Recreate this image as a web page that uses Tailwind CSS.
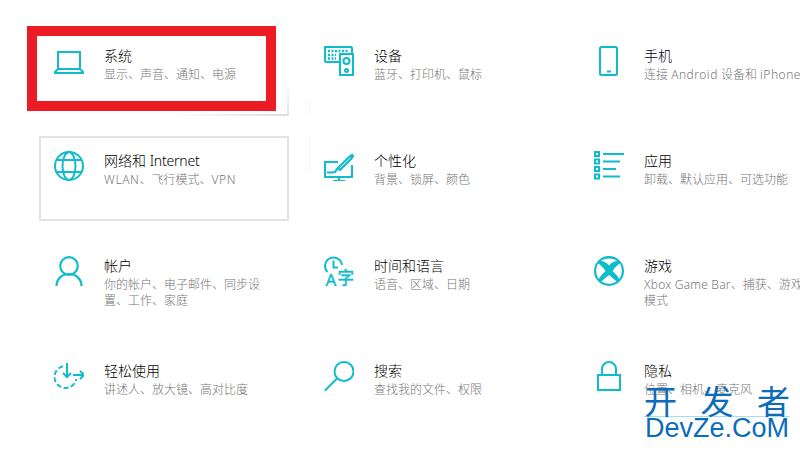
<!DOCTYPE html>
<html lang="zh-CN">

<head>
  <meta charset="UTF-8">
  <title>Windows 设置</title>
  <script src="https://cdn.jsdelivr.net/npm/@tailwindcss/browser@4"></script>
</head>

<body class="bg-white">
  <div class="relative w-[800px] h-[450px] overflow-hidden bg-white font-['Noto_Sans','Noto_Sans_CJK_SC',sans-serif] font-light">
    <div class="grid grid-cols-[270px_270px_270px] auto-rows-[105px] pl-[40px] pt-[32px]">

      <!-- row 1 -->
      <div class="flex gap-[20px] w-[249px] h-[84px] pl-[14px] pt-[14px]">
        <svg class="w-[30px] h-[30px] shrink-0" viewBox="0 0 30 30" fill="none" stroke="#0fbccb" stroke-width="2">
          <path d="M4 23V6h22v17" />
          <path d="M4 23L1 26v1h28v-1l-3-3z" />
        </svg>
        <div class="w-[160px]">
          <div class="text-[14px] leading-[20px] text-black">系统</div>
          <div class="mt-px text-[12px] leading-[16px] text-[#767676]">显示、声音、通知、电源</div>
        </div>
      </div>
      <div class="flex gap-[20px] w-[249px] h-[84px] pl-[14px] pt-[14px]">
        <svg class="w-[30px] h-[30px] shrink-0" viewBox="0 0 30 30" fill="none" stroke="#0fbccb" stroke-width="2">
          <path d="M15 16H2a1 1 0 0 1-1-1V1h26a1 1 0 0 1 1 1v5" />
          <rect x="16" y="8" width="13" height="21" />
          <circle cx="22.500" cy="15" r="3" />
          <circle cx="22.500" cy="24.500" r="1.500" />
          <path d="M4 5h20M4 9h8M4 12.500h8" stroke-width="2.500" stroke-dasharray="2 1.500" />
        </svg>
        <div class="w-[160px]">
          <div class="text-[14px] leading-[20px] text-black">设备</div>
          <div class="mt-px text-[12px] leading-[16px] text-[#767676]">蓝牙、打印机、鼠标</div>
        </div>
      </div>
      <div class="flex gap-[20px] w-[249px] h-[84px] pl-[14px] pt-[14px]">
        <svg class="w-[30px] h-[30px] shrink-0" viewBox="0 0 30 30" fill="none" stroke="#0fbccb" stroke-width="2">
          <rect x="6" y="1" width="17" height="28" rx="1.500" />
          <path d="M13 25.500h4" />
        </svg>
        <div class="w-[160px]">
          <div class="text-[14px] leading-[20px] text-black">手机</div>
          <div class="mt-px text-[12px] leading-[16px] text-[#767676] whitespace-nowrap">连接 <span class="tracking-[0.5px]">Android</span> 设备和 <span class="tracking-[0.5px]">iPhone</span></div>
        </div>
      </div>

      <!-- row 2 -->
      <div class="flex gap-[20px] w-[250px] h-[85px] -ml-px -mt-px pl-[13px] pt-[13px] border-2 border-[#e3e3e3]">
        <svg class="w-[30px] h-[30px] shrink-0" viewBox="0 0 30 30" fill="none" stroke="#0fbccb" stroke-width="2">
          <circle cx="15" cy="15" r="14" />
          <ellipse cx="15" cy="15" rx="6.500" ry="14" />
          <path d="M3 9h24M3 21h24" />
        </svg>
        <div class="w-[160px]">
          <div class="text-[14px] leading-[20px] text-black">网络和 <span class="tracking-[-0.2px]">Internet</span></div>
          <div class="mt-px text-[12px] leading-[16px] text-[#767676]"><span class="tracking-[0.6px]">WLAN</span>、飞行模式、<span class="tracking-[0.6px]">VPN</span></div>
        </div>
      </div>
      <div class="flex gap-[20px] w-[249px] h-[84px] pl-[14px] pt-[14px]">
        <svg class="w-[30px] h-[30px] shrink-0" viewBox="0 0 30 30" fill="none" stroke="#0fbccb" stroke-width="2">
          <path d="M14 11H1v15h27V14" />
          <path d="M15 26v3M9 30h12" />
          <path d="M14 17L25 6l3-2 1 1-2 3-11 11z" stroke-width="2.200" />
          <path d="M3 21.500c4 0 6 0 8-.5 1-1 1.500-2.500 3-4" stroke-width="2.200" />
        </svg>
        <div class="w-[160px]">
          <div class="text-[14px] leading-[20px] text-black">个性化</div>
          <div class="mt-px text-[12px] leading-[16px] text-[#767676]">背景、锁屏、颜色</div>
        </div>
      </div>
      <div class="flex gap-[20px] w-[249px] h-[84px] pl-[14px] pt-[14px]">
        <svg class="w-[30px] h-[30px] shrink-0" viewBox="0 0 30 30" fill="none" stroke="#0fbccb" stroke-width="2">
          <path d="M9 3h21M9 10.500h17M9 18h13M9 25.500h17" />
          <path d="M1 1h4v4H1zM1 8.500h4v4H1zM1 16h4v4H1zM1 23.500h4v4H1z" />
        </svg>
        <div class="w-[160px]">
          <div class="text-[14px] leading-[20px] text-black">应用</div>
          <div class="mt-px text-[12px] leading-[16px] text-[#767676]">卸载、默认应用、可选功能</div>
        </div>
      </div>

      <!-- row 3 -->
      <div class="flex gap-[20px] w-[249px] h-[84px] pl-[14px] pt-[14px]">
        <svg class="w-[30px] h-[30px] shrink-0" viewBox="0 0 30 30" fill="none" stroke="#0fbccb" stroke-width="2.200">
          <circle cx="15" cy="10" r="8.800" />
          <path d="M2.500 30c0-7 5.500-12 12.500-12s12.500 5 12.500 12" />
        </svg>
        <div class="w-[160px]">
          <div class="text-[14px] leading-[20px] text-black">帐户</div>
          <div class="mt-px text-[12px] leading-[16px] text-[#767676]">你的帐户、电子邮件、同步设置、工作、家庭</div>
        </div>
      </div>
      <div class="flex gap-[20px] w-[249px] h-[84px] pl-[14px] pt-[14px]">
        <svg class="w-[30px] h-[30px] shrink-0 overflow-visible" viewBox="0 0 30 30" fill="none" stroke="#0fbccb" stroke-width="2">
          <path d="M3.500 16A8.500 8.500 0 1 1 18 9" />
          <path d="M9.500 4.500v7H14" />
          <text x="1.500" y="30" font-size="17" font-weight="400" fill="#0fbccb" stroke="#0fbccb" stroke-width="0.400">A</text>
          <text x="13.500" y="27.500" font-size="16.500" font-weight="400" fill="#0fbccb" stroke="#0fbccb" stroke-width="0.500">字</text>
        </svg>
        <div class="w-[160px]">
          <div class="text-[14px] leading-[20px] text-black">时间和语言</div>
          <div class="mt-px text-[12px] leading-[16px] text-[#767676]">语音、区域、日期</div>
        </div>
      </div>
      <div class="flex gap-[20px] w-[249px] h-[84px] pl-[14px] pt-[14px]">
        <svg class="w-[30px] h-[30px] shrink-0" viewBox="0 0 30 30">
          <circle cx="15" cy="15" r="15" fill="#0fbccb" />
          <path d="M7 4.500Q15 .5 23 4.500 18 6 15 9.500 12 6 7 4.500z" fill="#fff" />
          <path d="M4 7.500Q8 9.500 11.500 15 7 19 4.500 23 0 15 4 7.500z" fill="#fff" />
          <path d="M26 7.500Q22 9.500 18.500 15 23 19 25.500 23 30 15 26 7.500z" fill="#fff" />
          <path d="M15 19Q10 23 7.500 25.500 15 30 22.500 25.500 20 23 15 19z" fill="#fff" />
        </svg>
        <div class="w-[160px]">
          <div class="text-[14px] leading-[20px] text-black">游戏</div>
          <div class="mt-px text-[12px] leading-[16px] text-[#767676]"><span class="tracking-[0.2px]">Xbox Game Bar</span>、捕获、游戏模式</div>
        </div>
      </div>

      <!-- row 4 -->
      <div class="flex gap-[20px] w-[249px] h-[84px] pl-[14px] pt-[14px]">
        <svg class="w-[30px] h-[30px] shrink-0" viewBox="0 0 30 30" fill="none" stroke="#0fbccb" stroke-width="2">
          <path d="M9 5.300A11 11 0 1 0 22.300 18" stroke-dasharray="5 2.500" />
          <path d="M13 2v14M9 12l4 4 4-4M19 14h11M26 10l4 4-4 4" />
        </svg>
        <div class="w-[160px]">
          <div class="text-[14px] leading-[20px] text-black">轻松使用</div>
          <div class="mt-px text-[12px] leading-[16px] text-[#767676]">讲述人、放大镜、高对比度</div>
        </div>
      </div>
      <div class="flex gap-[20px] w-[249px] h-[84px] pl-[14px] pt-[14px]">
        <svg class="w-[30px] h-[30px] shrink-0" viewBox="0 0 30 30" fill="none" stroke="#0fbccb" stroke-width="2">
          <circle cx="20" cy="10.500" r="9.500" />
          <path d="M13 17.500L1.500 29" stroke-linecap="round" />
        </svg>
        <div class="w-[160px]">
          <div class="text-[14px] leading-[20px] text-black">搜索</div>
          <div class="mt-px text-[12px] leading-[16px] text-[#767676]">查找我的文件、权限</div>
        </div>
      </div>
      <div class="flex gap-[20px] w-[249px] h-[84px] pl-[14px] pt-[14px]">
        <svg class="w-[30px] h-[30px] shrink-0" viewBox="0 0 30 30" fill="none" stroke="#0fbccb" stroke-width="2">
          <rect x="4" y="14" width="22" height="15" />
          <path d="M8 14V8a7 7 0 0 1 14 0v6" />
        </svg>
        <div class="w-[160px]">
          <div class="text-[14px] leading-[20px] text-black">隐私</div>
          <div class="mt-px text-[12px] leading-[16px] text-[#767676]">位置、相机、麦克风</div>
        </div>
      </div>
    </div>

    <!-- leftover hover border of the first tile, under the red box -->
    <div class="absolute left-[175px] top-[114px] w-[114px] h-[2px] bg-gradient-to-r from-white to-[#dcdcdc]"></div>
    <div class="absolute left-[287px] top-[80px] w-[2px] h-[35px] bg-gradient-to-b from-white to-[#e3e3e3]"></div>
    <!-- faint edges of the middle column -->
    <div class="absolute left-[309px] top-[100px] w-px h-[15px] bg-[#f6f6f6]"></div>
    <div class="absolute left-[309px] top-[136px] w-px h-[36px] bg-[#f6f6f6]"></div>
    <!-- red highlight drawn over the screenshot -->
    <div class="absolute left-[27px] top-[26px] w-[249px] h-[85px] border-[10px] border-[#ed1c24]"></div>

    <!-- watermark -->
    <div class="absolute left-[644px] top-[384px] w-[146px] text-[#0b6cba] font-normal">
      <div class="flex justify-between text-[33px] leading-[32px] font-['Noto_Sans_CJK_SC',sans-serif]">
        <span>开</span><span>发</span><span>者</span>
      </div>
      <div class="h-px bg-[#9fe0f5]"></div>
      <div class="pl-px text-[27px] leading-[22px] font-['Liberation_Sans',sans-serif] whitespace-nowrap">DevZe.CoM</div>
    </div>
  </div>
</body>

</html>
